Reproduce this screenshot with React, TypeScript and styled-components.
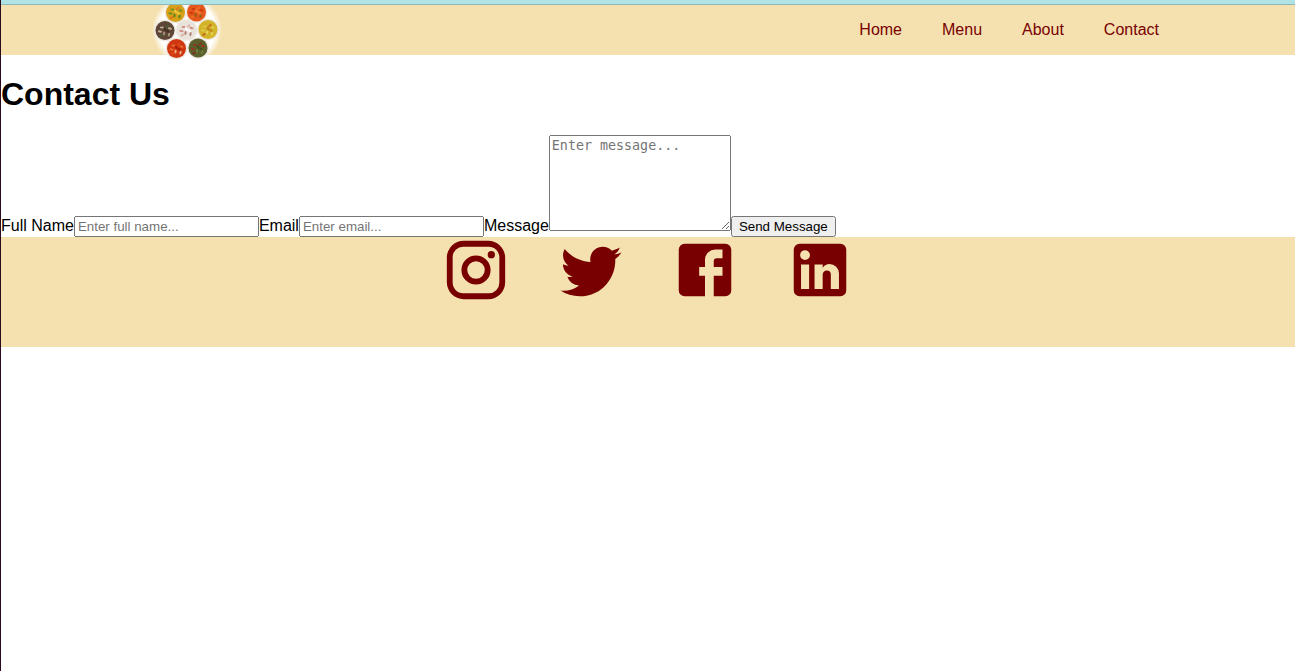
import React from 'react';
import styled, { createGlobalStyle } from 'styled-components';

const GlobalStyle = createGlobalStyle`
  * { box-sizing: border-box; }
  body {
    margin: 0;
    background: #fff;
    font-family: "Liberation Sans", Arial, sans-serif;
    font-size: 16px;
    color: #000;
  }
`;

const Page = styled.div`
  min-height: 671px;
  border-left: 1px solid #2c0a1e;
`;

const TopStrip = styled.div`
  height: 5px;
  background: #b0e4e4;
  border-bottom: 1px solid #8fb8b8;
`;

const Nav = styled.nav`
  height: 50px;
  padding: 0 136px 0 151px;
  display: flex;
  justify-content: space-between;
  align-items: center;
  background: #f5e1b0;
`;

const Logo = styled.svg`
  width: 70px;
  height: 56px;
  align-self: flex-start;
  flex: none;
`;

const NavLinks = styled.div`
  display: flex;
  gap: 40px;
`;

const NavLink = styled.a`
  color: #780000;
  line-height: 18px;
`;

const Title = styled.h1`
  margin: 21px 0 22px;
  font-size: 32px;
  line-height: 37px;
`;

const Form = styled.form`
  height: 102px;
  line-height: 18px;
  white-space: nowrap;
`;

const Input = styled.input`
  width: 185px;
  height: 21px;
  padding: 1px 2px;
  font: 13.333px "Liberation Sans", Arial, sans-serif;
`;

const Message = styled.textarea`
  width: 182px;
  height: 96px;
  padding: 2px;
  font: 13.333px "DejaVu Sans Mono", monospace;
`;

const SendButton = styled.button`
  width: 105px;
  height: 21px;
  padding: 1px 6px;
  font: 13.333px "Liberation Sans", Arial, sans-serif;
`;

const Footer = styled.footer`
  height: 110px;
  display: flex;
  justify-content: center;
  align-items: flex-start;
  gap: 44.7px;
  background: #f5e1b0;
`;

const SocialIcon = styled.svg`
  flex: none;
  width: 70px;
  height: 70px;
  margin-top: -2px;
  fill: #780000;
`;

const socials = [
  {
    name: 'Instagram',
    path: 'M7.8 2h8.4C19.4 2 22 4.6 22 7.8v8.4a5.8 5.8 0 0 1-5.8 5.8H7.8C4.6 22 2 19.4 2 16.2V7.8A5.8 5.8 0 0 1 7.8 2m-.2 2A3.6 3.6 0 0 0 4 7.6v8.8C4 18.39 5.61 20 7.6 20h8.8a3.6 3.6 0 0 0 3.6-3.6V7.6C20 5.61 18.39 4 16.4 4H7.6m9.65 1.5a1.25 1.25 0 0 1 1.25 1.25A1.25 1.25 0 0 1 17.25 8 1.25 1.25 0 0 1 16 6.75a1.25 1.25 0 0 1 1.25-1.25M12 7a5 5 0 0 1 5 5 5 5 0 0 1-5 5 5 5 0 0 1-5-5 5 5 0 0 1 5-5m0 2a3 3 0 0 0-3 3 3 3 0 0 0 3 3 3 3 0 0 0 3-3 3 3 0 0 0-3-3z',
  },
  {
    name: 'Twitter',
    path: 'M22.46 6c-.77.35-1.6.58-2.46.69.88-.53 1.56-1.37 1.88-2.38-.83.5-1.75.85-2.72 1.05C18.37 4.5 17.26 4 16 4c-2.35 0-4.27 1.92-4.27 4.29 0 .34.04.67.11.98C8.28 9.09 5.11 7.38 3 4.79c-.37.63-.58 1.37-.58 2.15 0 1.49.75 2.81 1.91 3.56-.71 0-1.37-.2-1.95-.5v.03c0 2.08 1.48 3.82 3.44 4.21a4.22 4.22 0 0 1-1.93.07 4.28 4.28 0 0 0 4 2.98 8.521 8.521 0 0 1-5.33 1.84c-.34 0-.68-.02-1.02-.06C3.44 20.29 5.7 21 8.12 21 16 21 20.33 14.46 20.33 8.79c0-.19 0-.37-.01-.56.84-.6 1.56-1.36 2.14-2.23z',
  },
  {
    name: 'Facebook',
    path: 'M5 3h14a2 2 0 0 1 2 2v14a2 2 0 0 1-2 2H5a2 2 0 0 1-2-2V5a2 2 0 0 1 2-2m13 2h-2.5A3.5 3.5 0 0 0 12 8.5V11h-2v3h2v7h3v-7h3v-3h-3V9a1 1 0 0 1 1-1h2V5z',
  },
  {
    name: 'LinkedIn',
    path: 'M19 3a2 2 0 0 1 2 2v14a2 2 0 0 1-2 2H5a2 2 0 0 1-2-2V5a2 2 0 0 1 2-2h14m-.5 15.5v-5.3a3.26 3.26 0 0 0-3.26-3.26c-.85 0-1.84.52-2.32 1.3v-1.11h-2.79v8.37h2.79v-4.93c0-.77.62-1.4 1.39-1.4a1.4 1.4 0 0 1 1.4 1.4v4.93h2.79M6.88 8.56a1.68 1.68 0 0 0 1.68-1.68c0-.93-.75-1.69-1.68-1.69a1.69 1.69 0 0 0-1.69 1.69c0 .93.76 1.68 1.69 1.68m1.39 9.94v-8.37H5.5v8.37h2.77z',
  },
];

type Dish = { x: number; y: number; base: string; bits: string[] };

const dishes: Dish[] = [
  { x: 23.5, y: 7.5, base: '#d8a018', bits: ['#4f8f20', '#f0cf48', '#39801c', '#e06b20'] },
  { x: 44.5, y: 7, base: '#e5571a', bits: ['#c53210', '#f28a3c', '#78641a', '#f07028'] },
  { x: 13, y: 25.5, base: '#5e4636', bits: ['#d8c8b0', '#39291e', '#b9a58a', '#446034'] },
  { x: 34.5, y: 25, base: '#e9e3dc', bits: ['#c87868', '#ffffff', '#a86850', '#d8a8a0'] },
  { x: 56, y: 24.5, base: '#d3b428', bits: ['#e0cd50', '#b87818', '#e8d860', '#c4601c'] },
  { x: 24.5, y: 43.5, base: '#cf3710', bits: ['#f07838', '#a01808', '#f5c8a0', '#e04818'] },
  { x: 46, y: 43, base: '#59602b', bits: ['#a82c20', '#3f4a1c', '#7a8440', '#882820'] },
];

const spots = [
  [-3, -3], [3, 1], [-1, 3], [2, -4], [-5, 1], [0, -1], [4, 4], [-4, 5], [5, -2],
];

function DishesLogo() {
  return (
    <Logo viewBox="0 0 70 56">
      <defs>
        <radialGradient id="plate">
          <stop offset="0.8" stopColor="#fff" />
          <stop offset="1" stopColor="#fff" stopOpacity="0" />
        </radialGradient>
      </defs>
      <circle cx="35" cy="25" r="35" fill="url(#plate)" />
      {dishes.map((d) => (
        <g key={`${d.x}-${d.y}`} transform={`translate(${d.x} ${d.y})`}>
          <circle r="10.8" fill="#eee9e2" />
          <circle r="9.5" fill={d.base} />
          {spots.map(([x, y], i) => (
            <ellipse
              key={i}
              cx={x}
              cy={y}
              rx="2.1"
              ry="1.1"
              transform={`rotate(${i * 47} ${x} ${y})`}
              fill={d.bits[i % 4]}
              opacity="0.8"
            />
          ))}
        </g>
      ))}
    </Logo>
  );
}

export default function App() {
  return (
    <Page>
      <GlobalStyle />
      <TopStrip />
      <Nav>
        <DishesLogo />
        <NavLinks>
          <NavLink>Home</NavLink>
          <NavLink>Menu</NavLink>
          <NavLink>About</NavLink>
          <NavLink>Contact</NavLink>
        </NavLinks>
      </Nav>
      <Title>Contact Us</Title>
      <Form>
        <label htmlFor="name">Full Name</label>
        <Input id="name" placeholder="Enter full name..." />
        <label htmlFor="email">Email</label>
        <Input id="email" placeholder="Enter email..." />
        <label htmlFor="message">Message</label>
        <Message id="message" placeholder="Enter message..." />
        <SendButton type="button">Send Message</SendButton>
      </Form>
      <Footer>
        {socials.map((s) => (
          <SocialIcon key={s.name} viewBox="0 0 24 24" aria-label={s.name}>
            <path d={s.path} />
          </SocialIcon>
        ))}
      </Footer>
    </Page>
  );
}
